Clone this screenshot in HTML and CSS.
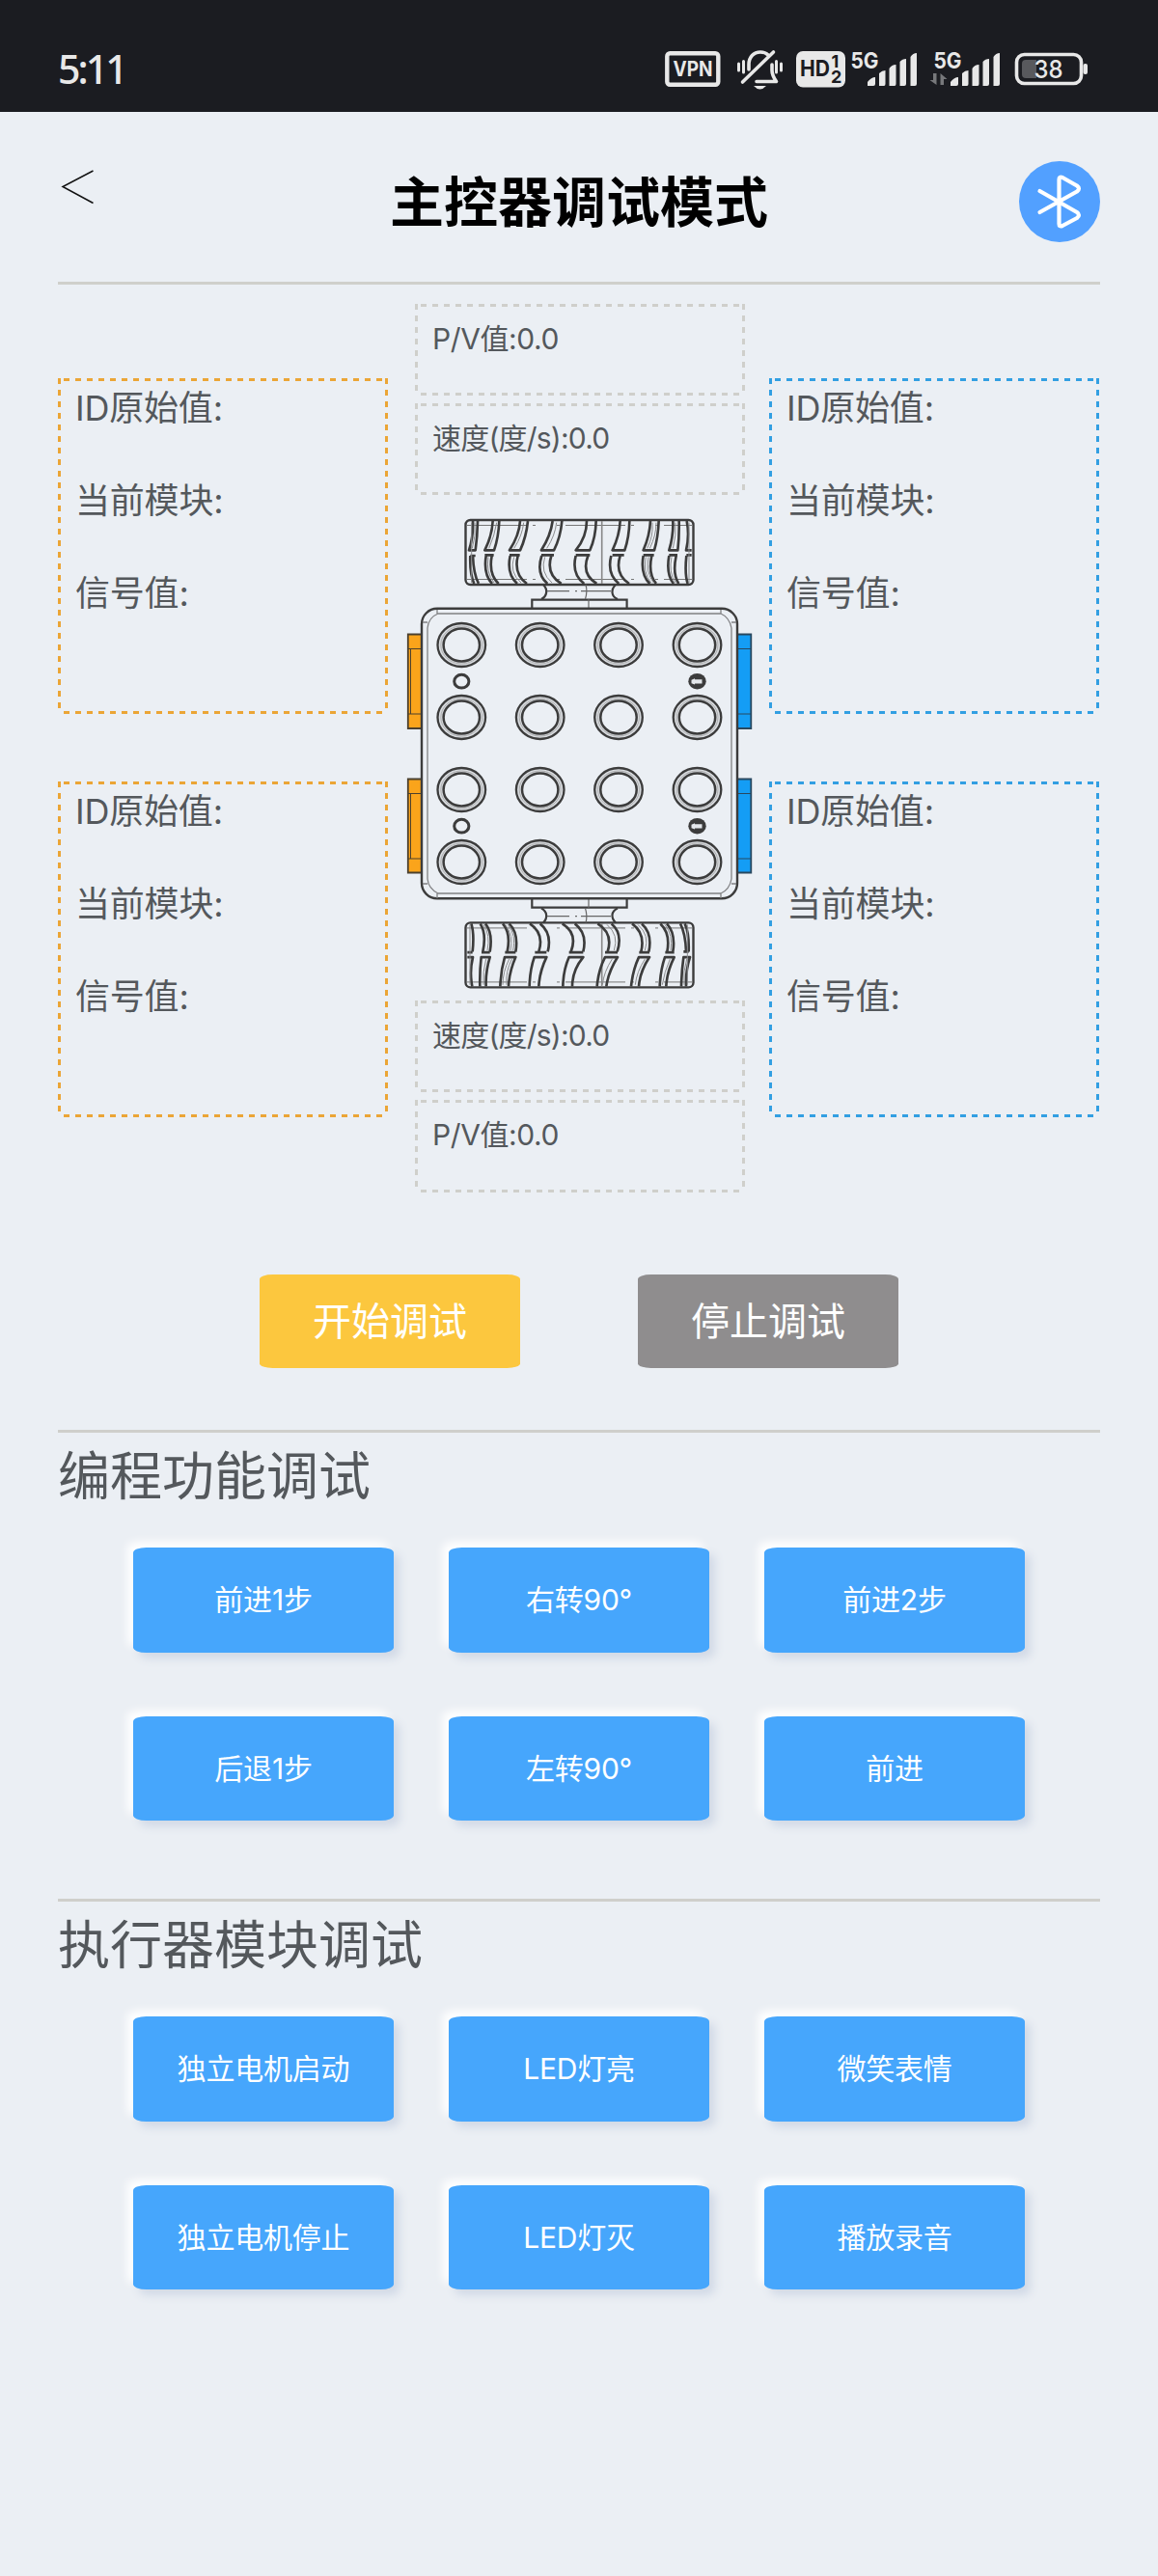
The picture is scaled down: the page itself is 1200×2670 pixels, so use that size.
FILE: index.html
```html
<!DOCTYPE html>
<html lang="zh-CN">
<head>
<meta charset="utf-8">
<title>主控器调试模式</title>
<link rel="stylesheet" href="styles.css">
</head>
<body>
<div class="status">
  <span class="clock">5:11</span>
  <svg class="status-icons" width="448" height="60" viewBox="684 41 448 60">
    <g fill="none" stroke="#e8e8e8">
      <rect x="691.3" y="55.3" width="53" height="32.5" rx="3" stroke-width="4.4"/>
      <g stroke-width="3.6" stroke-linecap="round" stroke-linejoin="round">
        <path d="M776 72V67C776 59 781 54 788 54C791 54 794 55 796 57M800 67V73Q800 78 804.500 84.500H784"/>
        <path d="M769.500 85L801.500 54"/>
        <path stroke-width="3" d="M765.500 66V73M770.500 63.500V75M804.500 63.500V75M809.500 66V73"/>
      </g>
      <rect x="1053.500" y="56.500" width="67" height="30" rx="8" stroke-width="3.6"/>
    </g>
    <path fill="#e8e8e8" d="M781 89H794Q787.500 96 781 89Z"/>
    <rect x="825" y="53" width="51" height="37.500" rx="7" fill="#e8e8e8"/>
    <g id="bars" fill="#e8e8e8">
      <path d="M899 89V85Q903 80 907 80V87Q907 89 905 89ZM911 89V76Q914 73 917.500 73V87Q917.500 89 916 89ZM921.500 89V71Q924 67 928.500 67V87Q928.500 89 927 89ZM932.500 89V64Q935 61 939 61V87Q939 89 937 89ZM943.500 89V59Q946 55 950 55V87Q950 89 948 89Z"/>
    </g>
    <use href="#bars" x="86"/>
    <path d="M970.500 76V88L963.500 83H967V76ZM974.500 88V76L981.500 82H978V88Z" fill="#77787b"/>
    <path d="M1074 62H1063Q1059 62 1059 66V77Q1059 81 1063 81H1074Z" fill="#58595d"/>
    <rect x="1122.500" y="66" width="4.500" height="11" rx="2" fill="#e8e8e8"/>
    <g class="status-text">
      <text x="697.500" y="79" font-size="21" textLength="41" lengthAdjust="spacingAndGlyphs">VPN</text>
      <text x="829" y="79" font-size="23" class="dark" textLength="31" lengthAdjust="spacingAndGlyphs">HD</text>
      <text x="861.500" y="70" font-size="18" class="dark">1</text>
      <text x="861" y="85.500" font-size="18" class="dark">2</text>
      <text x="881.500" y="70.500" font-size="23" textLength="29" lengthAdjust="spacingAndGlyphs">5G</text>
      <text x="967.500" y="70.500" font-size="23" textLength="29" lengthAdjust="spacingAndGlyphs">5G</text>
      <text x="1071.500" y="81" font-size="26" class="level" textLength="30" lengthAdjust="spacingAndGlyphs">38</text>
    </g>
  </svg>
</div>

<header class="header">
  <svg class="back" width="36" height="38" viewBox="62 175 36 38"><path d="M96.500 177L65 193.500L96.500 210.500" fill="none" stroke="#111" stroke-width="1.500"/></svg>
  <h1>主控器调试模式</h1>
  <svg class="bluetooth" width="84" height="84" viewBox="0 0 84 84">
    <circle cx="42" cy="42" r="42" fill="#52a0ff"/>
    <path d="M21.500 31L60 53Q64 56 60 59L45 67Q41.500 68.500 41.500 65V19Q41.500 15.500 45 17L60 25.500Q64 28.500 60 31.500L21.500 53" fill="none" stroke="#fff" stroke-width="4.200" stroke-linecap="round" stroke-linejoin="round"/>
  </svg>
</header>

<main>
  <section class="board">
    <div class="side">
      <div class="port orange"><p>ID原始值:</p><p>当前模块:</p><p>信号值:</p></div>
      <div class="port orange"><p>ID原始值:</p><p>当前模块:</p><p>信号值:</p></div>
    </div>
    <div class="center">
      <div class="motor">P/V值:0.0</div>
      <div class="motor speed">速度(度/s):0.0</div>
      <svg class="robot" width="342" height="500" viewBox="430 525 342 500">
        <defs>
          <g id="half" fill="none" stroke="#3c3c3c">
            <rect x="482.500" y="539" width="236" height="67" rx="5" stroke-width="2.400"/>
            <path d="M484 544.500H718M484 600.500H718" stroke-width="1" stroke="#777" stroke-dasharray="62 6 3 22 3 6"/>
            <path d="M623.700 540V605" stroke-width="1.600" stroke="#888"/>
            <path d="M563 606C568 611 567 618 561 621M638 606C633 611 633 618 640 621" stroke-width="2.200"/>
            <path d="M551.300 631V621.700H649.600V631" stroke-width="2.200"/>
            <path d="M567 612.700H590M596 612.700H598M602 612.700H633M607 606Q609 613 606.500 621M610 621V631" stroke-width="1.200" stroke="#666"/>
          </g>
          <g id="tread" transform="translate(400 300) scale(.33333)" fill="none" stroke="#3c3c3c" stroke-width="8" stroke-linejoin="round">
            <path d="M270 720Q272 768 258 811H278Q284 768 285 720M332 720Q330 765 307 811H336Q350 770 352 720M417 720Q414 765 384 811H417Q436 770 441 720M518 720Q512 765 483 811H522Q543 770 547 720M624 720Q624 770 590 811H634Q652 770 653 720M728 720Q726 765 704 811H742Q756 770 757 720M822 720Q820 765 800 811H834Q846 770 848 720M892 720Q894 765 880 811H907Q912 770 911 720M935 720Q944 765 933 811H950"/>
            <path d="M262 828H278M262 828Q260 885 274 915M270 828Q272 885 288 915M307 826H335M311 828Q302 885 330 915M329 828Q318 885 350 915M384 826H416M386 828Q374 885 408 915M410 828Q396 885 438 915M483 826H522M484 828Q466 885 502 915M514 828Q496 885 545 915M590 826H634M590 828Q576 885 616 915M628 828Q606 885 655 915M704 826H740M700 828Q686 885 724 915M728 828Q710 885 756 915M800 826H833M800 828Q790 885 820 915M826 828Q814 885 840 915M880 826H906M880 828Q870 885 894 915M902 828Q890 885 910 915M934 826H950M934 828Q928 885 938 915"/>
            <path stroke-width="3" stroke="#8a8b8d" d="M276 725Q280 768 268 805M344 725Q338 765 320 805M428 725Q424 765 398 805M530 725Q526 765 500 805M828 725Q832 765 812 805M840 725Q840 765 820 805M900 725Q903 765 892 805M398 832Q382 880 420 912M494 832Q478 880 516 912M318 832Q310 880 336 912M808 832Q798 880 824 912M816 832Q806 880 832 912M888 832Q878 880 900 912M942 725V912M266 725V912"/>
          </g>
        </defs>
        <use href="#half"/>
        <use href="#half" transform="translate(0 1562.400) scale(1 -1)"/>
        <use href="#tread"/>
        <use href="#tread" transform="rotate(180 600.500 781.200)"/>
        <g stroke="#4b402e" stroke-width="1.800">
          <g fill="#faa41b"><path d="M437 657.500H422.800V755H437M437 807.500H422.800V904.500H437"/><path d="M423 672.500H437M423 740H437M423 822.500H437M423 890H437M425.500 673V740M425.500 823V890" stroke-width="1"/></g>
          <g fill="#149df5" stroke="#29485f"><path d="M764 657.500H778.300V755H764M764 807.500H778.300V904.500H764"/><path d="M764 672.500H778M764 740H778M764 822.500H778M764 890H778" stroke-width="1"/></g>
        </g>
        <g fill="none" stroke="#3c3c3c">
          <rect x="437" y="630.800" width="327" height="300.500" rx="16" stroke-width="2.400"/>
          <path d="M443 651V911Q444 921 454 926H747Q756 922 758 911V651Q756 640 747 636H454Q444 640 443 651ZM438 645H443M453 632V636M747 632V636M758 645H763M438 916H443M453 926V931M747 926V931M758 916H763" stroke-width="1.300" stroke="#808183"/>
        </g>
        <defs>
          <g id="stud" fill="none" stroke="#3c3c3c">
            <ellipse rx="22" ry="20" stroke="#d8dbdf" stroke-width="5"/>
            <ellipse rx="24.800" ry="22.500" stroke-width="2.300"/>
            <ellipse rx="21.500" ry="19.500" stroke-width=".700" stroke="#999"/>
            <ellipse rx="18.700" ry="17" stroke-width="2.500"/>
          </g>
          <g id="row"><use href="#stud" x="478.300"/><use href="#stud" x="559.700"/><use href="#stud" x="641"/><use href="#stud" x="722.500"/></g>
          <g id="holes">
            <ellipse cx="478.300" rx="7.600" ry="6.900" fill="none" stroke="#3c3c3c" stroke-width="3"/>
            <ellipse cx="722.500" rx="9.200" ry="8.300" fill="#3c3c3c"/>
            <path d="M716.500 -1.500L720 -3V-2H727.500V2.200H720V3.200L716.500 2Z" fill="#e4e7eb"/>
          </g>
        </defs>
        <use href="#row" y="668.500"/><use href="#row" y="743.500"/><use href="#row" y="818.500"/><use href="#row" y="893.500"/>
        <use href="#holes" y="706.200"/><use href="#holes" y="856.200"/>
      </svg>
      <div class="motor speed">速度(度/s):0.0</div>
      <div class="motor last">P/V值:0.0</div>
    </div>
    <div class="side">
      <div class="port blue"><p>ID原始值:</p><p>当前模块:</p><p>信号值:</p></div>
      <div class="port blue"><p>ID原始值:</p><p>当前模块:</p><p>信号值:</p></div>
    </div>
  </section>

  <div class="controls">
    <button class="control start">开始调试</button>
    <button class="control stop">停止调试</button>
  </div>

  <section class="group">
    <h2>编程功能调试</h2>
    <div class="actions">
      <button>前进1步</button><button>右转90°</button><button>前进2步</button>
      <button>后退1步</button><button>左转90°</button><button>前进</button>
    </div>
  </section>
  <section class="group">
    <h2>执行器模块调试</h2>
    <div class="actions">
      <button>独立电机启动</button><button>LED灯亮</button><button>微笑表情</button>
      <button>独立电机停止</button><button>LED灯灭</button><button>播放录音</button>
    </div>
  </section>
</main>
</body>
</html>
```

FILE: styles.css
```css
* { box-sizing: border-box; }
body {
  margin: 0;
  min-height: 2670px;
  background: #ebeff4;
  color: #54585c;
  font-family: Inter, "Noto Sans CJK SC", sans-serif;
}
h1, h2, p { margin: 0; font-weight: 400; }
button {
  border: 0;
  padding: 0;
  color: #fff;
  font-family: inherit;
  line-height: 1;
  border-radius: 5%;
}

.status {
  height: 116px;
  padding: 41px 68px 0 60px;
  display: flex;
  justify-content: space-between;
  background: #1b1c21;
  color: #e8e8e8;
}
.clock {
  font: 500 41px/60px "Noto Sans", sans-serif;
  letter-spacing: -2.9px;
}
.status-text { font-family: Inter, "Noto Sans", sans-serif; font-weight: 700; fill: #e8e8e8; }
.status-text .dark { fill: #1b1c21; }
.status-text .level { font-weight: 500; }

.header {
  height: 179px;
  margin: 0 60px;
  padding-top: 51px;
  display: flex;
  justify-content: space-between;
  align-items: flex-start;
  border-bottom: 3px solid #cfcfcb;
}
.back { margin: 8px 46px 0 2px; }
.header h1 {
  color: #000;
  font-size: 56px;
  font-weight: 700;
  line-height: 86px;
}

.board {
  display: grid;
  grid-template-columns: 370px 367px 342px;
  padding: 20px 60px 0;
}
.side { display: flex; flex-direction: column; gap: 70px; padding-top: 77px; }
.port, .motor {
  width: 342px;
  background:
    repeating-linear-gradient(90deg, transparent 0 6px, var(--dash) 6px 12px) 0 0 / 336px 3px no-repeat,
    repeating-linear-gradient(90deg, transparent 0 6px, var(--dash) 6px 12px) 0 100% / 336px 3px no-repeat,
    repeating-linear-gradient(180deg, var(--dash) 0 6px, transparent 6px 12px) 0 0 / 3px 100% no-repeat,
    repeating-linear-gradient(180deg, var(--dash) 0 6px, transparent 6px 12px) 100% 0 / 3px 100% no-repeat;
}
.port { height: 348px; padding: 7px 18px; font-size: 36px; letter-spacing: -.2px; }
.port p { height: 96px; line-height: 48px; }
.orange { --dash: #eba536; }
.blue { --dash: #329fe2; }
.motor {
  --dash: #cfcfcb;
  height: 95px;
  margin-bottom: 8px;
  padding: 15px 18px;
  font-size: 30px;
  line-height: 42px;
  letter-spacing: -.4px;
}
.speed { letter-spacing: -.8px; }
.motor.last { height: 96px; margin-bottom: 0; }
.center { display: flex; flex-direction: column; }
.robot { display: block; margin: 4px 0 12px; overflow: visible; }

.controls {
  display: flex;
  justify-content: center;
  gap: 122px;
  padding: 85px 0 64px;
}
.control { width: 270px; height: 97px; font-size: 40px; }
.start { background: #fcc73e; }
.stop { background: #8f8d8e; }

.group {
  height: 486px;
  margin: 0 60px;
  border-top: 3px solid #cfcfcb;
}
.group h2 { font-size: 54px; line-height: 92px; }
.actions {
  display: grid;
  grid-template-columns: repeat(3, 270px);
  grid-auto-rows: 108.5px;
  justify-content: center;
  gap: 66px 57px;
  padding-top: 27px;
}
.actions button {
  background: #46a6fc;
  font-size: 30px;
  letter-spacing: -.2px;
  box-shadow: 6px 6px 10px #d1d9e6, -6px -6px 10px #fff;
}
```
